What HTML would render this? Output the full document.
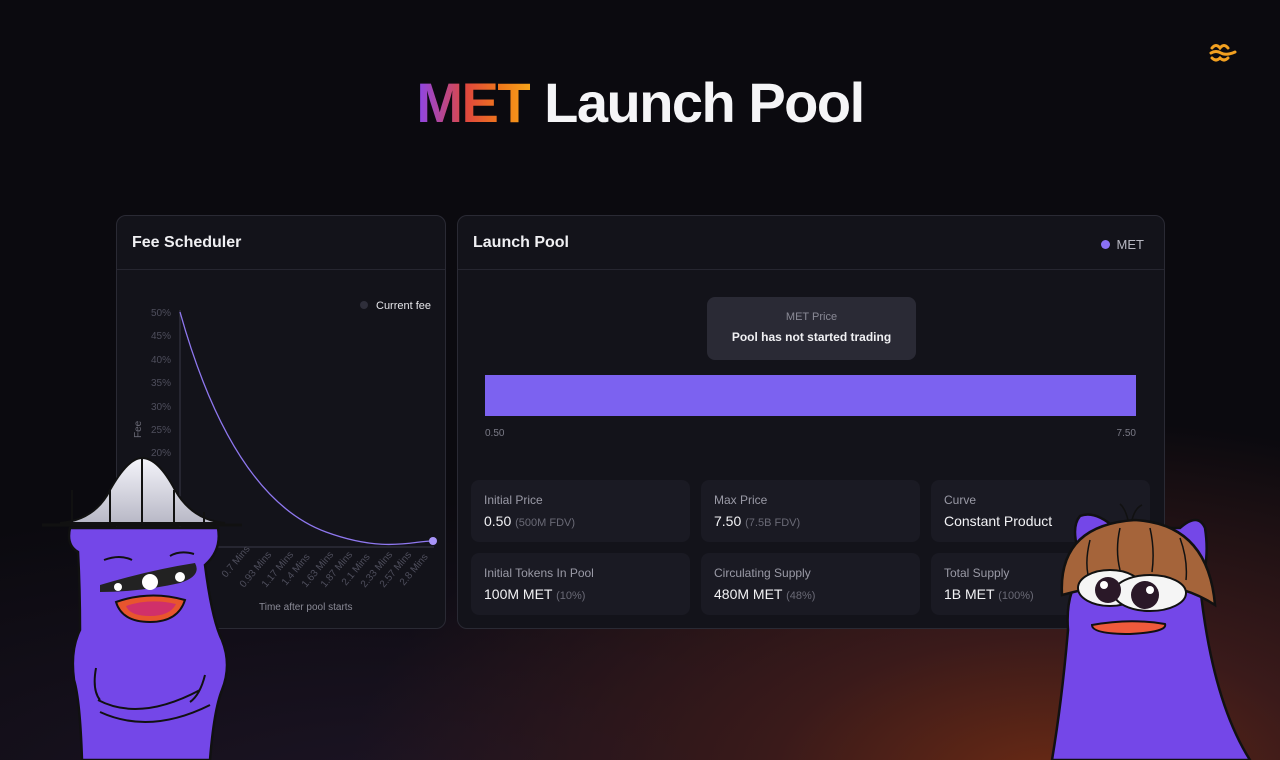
<!DOCTYPE html>
<html><head><meta charset="utf-8"><style>
*{margin:0;padding:0;box-sizing:border-box}
body{width:1280px;height:760px;overflow:hidden;position:relative;font-family:"Liberation Sans",sans-serif;
background:radial-gradient(ellipse 700px 360px at 1050px 780px,#6a2a14 0%,#3a1a1a 40%,rgba(20,12,20,0) 100%),radial-gradient(ellipse 900px 300px at 400px 800px,#1c1424 0%,rgba(0,0,0,0) 100%),#0b0a0f;}
h1{position:absolute;top:70px;left:0;width:1280px;text-align:center;font-size:56px;font-weight:700;color:#f5f5f7;letter-spacing:-1.5px}
h1 span{background:linear-gradient(90deg,#8a45ee 0%,#e0483c 45%,#f07a1a 75%,#f7a41a 100%);-webkit-background-clip:text;background-clip:text;color:transparent}
.card{position:absolute;background:#13131a;border:1px solid #2a2a34;border-radius:10px}
.hd{height:54px;border-bottom:1px solid #262630;padding:18px 15px;font-size:16px;font-weight:700;color:#f0f0f3}
.box{position:absolute;width:219px;height:62px;background:#1a1a23;border-radius:8px;padding:13px 13px}
.box .l{font-size:12px;color:#9a9aa6}
.box .v{font-size:14px;color:#f2f2f5;margin-top:6px}
.box .v small{font-size:11px;color:#6a6a76}
</style></head><body>
<h1><span>MET</span> Launch Pool</h1>
<svg style="position:absolute;left:1208px;top:42px" width="30" height="22" viewBox="0 0 30 22"><g fill="none" stroke="#f2a020" stroke-width="3" stroke-linecap="round"><path d="M4 6q4-5 8 0q4-5 8 0"/><path d="M3 11q5-3 10 0q5 3 14 -1"/><path d="M4 16q4 4 8 0q4 4 8 0"/></g></svg>

<div class="card" style="left:116px;top:215px;width:330px;height:414px">
<div class="hd">Fee Scheduler</div>
</div>
<svg style="position:absolute;left:116px;top:270px" width="330" height="350">
<circle cx="248" cy="35" r="4" fill="#2e2e3a"/><text x="260" y="39" font-size="11" fill="#e6e6ea" font-family="Liberation Sans">Current fee</text>
<g font-size="10" fill="#4e4e5c" font-family="Liberation Sans" text-anchor="end">
<text x="55" y="46">50%</text><text x="55" y="69">45%</text><text x="55" y="93">40%</text><text x="55" y="116">35%</text><text x="55" y="140">30%</text><text x="55" y="163">25%</text><text x="55" y="186">20%</text></g>
<text transform="translate(25,168) rotate(-90)" font-size="10" fill="#6a6a76" font-family="Liberation Sans">Fee</text>
<line x1="64" y1="40" x2="64" y2="277" stroke="#3a3a48"/>
<line x1="64" y1="277" x2="318" y2="277" stroke="#3a3a48"/>
<path d="M64 42 C100 170 150 240 210 262 S300 270 317 271" fill="none" stroke="#8f78f0" stroke-width="1.3"/>
<circle cx="317" cy="271" r="4" fill="#a894f8"/>
<g font-size="10" fill="#4e4e5c" font-family="Liberation Sans">
<text transform="translate(110,308) rotate(-50)">0.7 Mins</text><text transform="translate(128,318) rotate(-50)">0.93 Mins</text>
<text transform="translate(150,318) rotate(-50)">1.17 Mins</text><text transform="translate(170,316) rotate(-50)">1.4 Mins</text>
<text transform="translate(190,318) rotate(-50)">1.63 Mins</text><text transform="translate(209,318) rotate(-50)">1.87 Mins</text>
<text transform="translate(230,316) rotate(-50)">2.1 Mins</text><text transform="translate(249,318) rotate(-50)">2.33 Mins</text>
<text transform="translate(268,318) rotate(-50)">2.57 Mins</text><text transform="translate(288,316) rotate(-50)">2.8 Mins</text></g>
<text x="143" y="340" font-size="10" fill="#8a8a96" font-family="Liberation Sans">Time after pool starts</text>
</svg>

<div class="card" style="left:457px;top:215px;width:708px;height:414px">
<div class="hd">Launch Pool</div>
<div style="position:absolute;right:20px;top:21px;font-size:13px;color:#b8b8c2"><span style="display:inline-block;width:9px;height:9px;border-radius:50%;background:#8a70f5;margin-right:7px"></span>MET</div>
<div style="position:absolute;left:249px;top:81px;width:209px;height:63px;background:#2a2a35;border-radius:8px;text-align:center;padding-top:14px">
<div style="font-size:11px;color:#8a8a96">MET Price</div><div style="font-size:12px;font-weight:700;color:#f0f0f3;margin-top:7px">Pool has not started trading</div></div>
<div style="position:absolute;left:27px;top:159px;width:651px;height:41px;background:#7c62f0"></div>
<div style="position:absolute;left:27px;top:212px;font-size:10px;color:#7a7a86">0.50</div>
<div style="position:absolute;right:28px;top:212px;font-size:10px;color:#7a7a86">7.50</div>
<div class="box" style="left:13px;top:264px"><div class="l">Initial Price</div><div class="v">0.50 <small>(500M FDV)</small></div></div>
<div class="box" style="left:243px;top:264px"><div class="l">Max Price</div><div class="v">7.50 <small>(7.5B FDV)</small></div></div>
<div class="box" style="left:473px;top:264px"><div class="l">Curve</div><div class="v">Constant Product</div></div>
<div class="box" style="left:13px;top:337px"><div class="l">Initial Tokens In Pool</div><div class="v">100M MET <small>(10%)</small></div></div>
<div class="box" style="left:243px;top:337px"><div class="l">Circulating Supply</div><div class="v">480M MET <small>(48%)</small></div></div>
<div class="box" style="left:473px;top:337px"><div class="l">Total Supply</div><div class="v">1B MET <small>(100%)</small></div></div>
</div>

<!-- left character -->
<svg style="position:absolute;left:0;top:450px" width="250" height="310" viewBox="0 0 250 310">
<defs><linearGradient id="hg" x1="0" y1="0" x2="0" y2="1"><stop offset="0" stop-color="#f4f4fa"/><stop offset="1" stop-color="#b8b8c6"/></linearGradient></defs>
<path d="M60 73 Q95 70 110 40 Q128 8 142 8 Q158 8 175 40 Q192 70 225 73 Z" fill="url(#hg)" stroke="#111" stroke-width="2"/>
<g stroke="#111" stroke-width="2"><line x1="110" y1="40" x2="110" y2="73"/><line x1="142" y1="8" x2="142" y2="73"/><line x1="174" y1="40" x2="174" y2="73"/><line x1="204" y1="62" x2="204" y2="73"/><line x1="72" y1="40" x2="72" y2="73"/></g>
<line x1="42" y1="75" x2="242" y2="75" stroke="#111" stroke-width="3"/>
<path d="M70 78 Q66 95 78 102 Q80 140 80 180 Q70 200 74 230 Q80 250 82 310 L210 310 Q214 260 222 240 Q232 215 222 190 Q212 170 205 115 Q222 100 218 78 Z" fill="#7447e8" stroke="#111" stroke-width="2.5"/>
<path d="M104 110 Q120 104 132 110 M170 106 Q180 100 194 104" stroke="#111" stroke-width="2" fill="none"/>
<path d="M100 135 Q150 120 195 113 Q202 126 180 133 Q140 142 100 142 Z" fill="#222"/>
<circle cx="118" cy="137" r="4" fill="#fff"/><circle cx="150" cy="132" r="8" fill="#fff"/><circle cx="180" cy="127" r="5" fill="#fff"/>
<path d="M116 152 Q150 140 185 150 Q178 172 150 172 Q122 172 116 152 Z" fill="#e8552e" stroke="#111" stroke-width="2"/>
<path d="M126 156 Q150 148 176 154 Q170 166 150 166 Q130 166 126 156 Z" fill="#d0306a"/>
<path d="M96 218 Q92 240 100 250 M205 225 Q200 245 190 252" stroke="#111" stroke-width="2" fill="none"/>
<path d="M98 250 Q140 272 200 240 M100 262 Q150 285 210 255" fill="none" stroke="#111" stroke-width="2"/>
</svg>

<!-- right character -->
<svg style="position:absolute;left:1040px;top:500px" width="240" height="260" viewBox="0 0 240 260">
<path d="M45 70 Q28 30 40 16 Q55 10 75 28 L140 28 Q158 12 165 28 Q170 60 160 85 Q172 200 210 260 L12 260 Q22 200 28 130 Q25 90 45 70 Z" fill="#7447e8" stroke="#111" stroke-width="2.5"/>
<path d="M22 95 Q18 25 95 20 Q168 24 175 105 Q120 68 22 95 Z" fill="#a5643a" stroke="#111" stroke-width="2.5"/>
<g stroke="#111" stroke-width="1.5" fill="none"><path d="M50 40 Q45 60 48 75 M80 28 Q75 50 80 70 M110 28 Q115 50 112 72 M140 38 Q148 60 146 80"/><path d="M88 20 Q85 8 80 4 M92 20 Q95 8 102 5"/></g>
<ellipse cx="70" cy="88" rx="32" ry="18" fill="#f5f5f5" stroke="#111" stroke-width="2"/>
<ellipse cx="110" cy="93" rx="36" ry="18" fill="#f5f5f5" stroke="#111" stroke-width="2"/>
<circle cx="68" cy="90" r="13" fill="#2a1828"/><circle cx="105" cy="95" r="14" fill="#2a1828"/>
<circle cx="64" cy="85" r="4" fill="#fff"/><circle cx="110" cy="90" r="4" fill="#fff"/>
<path d="M52 125 Q90 118 125 124 Q128 132 90 134 Q52 134 52 125 Z" fill="#ef5a3c" stroke="#111" stroke-width="2"/>
</svg>
</body></html>
